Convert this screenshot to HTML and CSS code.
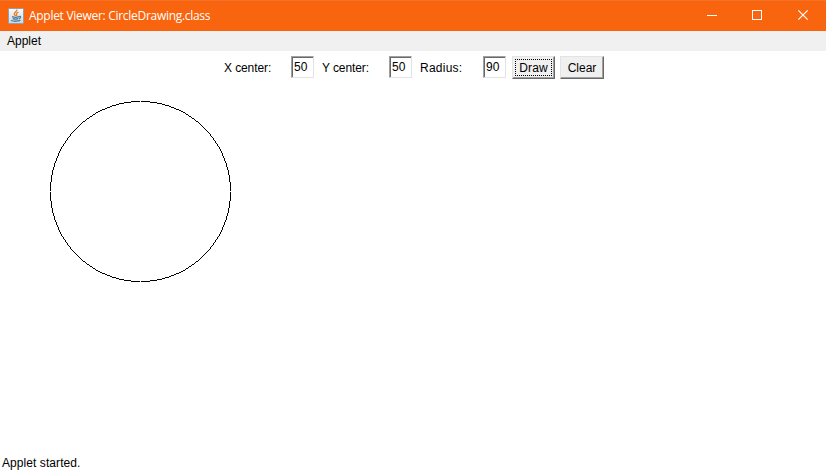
FILE: index.html
```
<!DOCTYPE html>
<html lang="en">
<head>
<meta charset="utf-8">
<title>Applet Viewer: CircleDrawing.class</title>
<link rel="stylesheet" href="styles.css">
</head>
<body>
<div class="window">
  <header class="titlebar">
    <svg class="logo" width="16" height="16" viewBox="0 0 16 16">
      <defs><linearGradient id="tile" x2="0" y2="1"><stop stop-color="#fafafa"/><stop offset="1" stop-color="#cfd6dd"/></linearGradient></defs>
      <rect x=".5" y=".5" width="15" height="15" rx="1" fill="url(#tile)" stroke="#8fa0ad"/>
      <path d="M8.8 1.5C9.5 3.5 6 4.4 6.3 6c.1.8.8 1.1 1.1 2M10.6 4C8.9 4.8 8 5.6 8.6 6.5c.4.6.1 1.1-.4 1.5" fill="none" stroke="#f07a22" stroke-width="1.3"/>
      <path d="M4 8.7c2 .7 5.300.7 7 0M4.700 10.600c1.800.6 4 .6 5.500 0M3 12.500c2.500 1 7.500 1 9.500-.2M11 8.600c2.200-.5 2.200 1.700-.2 2.300" fill="none" stroke="#487b9c" stroke-width="1.3"/>
    </svg>
    <span class="title">Applet Viewer: CircleDrawing.class</span>
    <div class="controls">
      <svg width="46" height="30" viewBox="0 0 46 30"><path d="M17 14.500h10" /></svg>
      <svg width="46" height="30" viewBox="0 0 46 30"><path d="M16.500 9.500h9v9h-9z"/></svg>
      <svg width="46" height="30" viewBox="0 0 46 30"><path class="cross" d="M16.300 9.300l9.400 9.400M25.700 9.300l-9.400 9.400"/></svg>
    </div>
  </header>
  <nav class="menubar"><span>Applet</span></nav>
  <main class="applet">
    <form class="toolbar">
      <label for="x">X center:</label><input id="x" value="50">
      <label for="y">Y center:</label><input id="y" value="50">
      <label for="r">Radius:</label><input id="r" value="90">
      <button type="button" class="draw"><span>Draw</span></button>
      <button type="button" class="clear"><span>Clear</span></button>
    </form>
    <canvas class="canvas" width="826" height="371"></canvas>
  </main>
  <footer class="status">Applet started.</footer>
</div>
<script src="circle.js"></script>
</body>
</html>
```
FILE: circle.js
```
// Plots a one-pixel circle by octants, leaving the four axis points open.
const ctx = document.querySelector('.canvas').getContext('2d');

function drawCircle(cx, cy, r) {
  for (let a = 1; a <= r * Math.SQRT1_2 + 0.5; a++) {
    const b = Math.round(Math.sqrt(r * r - a * a));
    for (const [dx, dy] of [[a, b], [b, a]]) {
      for (const sx of [-1, 1]) {
        for (const sy of [-1, 1]) ctx.fillRect(cx + sx * dx, cy + sy * dy, 1, 1);
      }
    }
  }
}

drawCircle(140, 111, 90);
```
FILE: styles.css
```
* { box-sizing: border-box; }
body {
  margin: 0;
  background: #fff;
  color: #000;
  font: 12px/14px "Liberation Sans", Arial, sans-serif;
}
.window { display: flex; flex-direction: column; width: 826px; height: 473px; overflow: hidden; }
.titlebar {
  display: flex;
  height: 31px;
  padding-left: 8px;
  align-items: center;
  background: #f9640e;
  border-top: 1px solid #f47228;
  color: #fff;
}
.logo { flex: none; }
.title { margin-left: 5px; font: 12px/16px "Open Sans", "Noto Sans", sans-serif; letter-spacing: -0.29px; white-space: nowrap; }
.controls { display: flex; margin-left: auto; margin-right: -2px; height: 30px; }
.controls path { fill: none; stroke: #fff; shape-rendering: crispEdges; }
.controls .cross { stroke-width: 1.2; shape-rendering: auto; }
.menubar { height: 20px; padding: 3px 7px; background: #f0f0f0; }
.applet { height: 403px; }
.toolbar { display: flex; height: 29px; padding: 5px 0 0 224px; align-items: flex-start; }
.toolbar label { width: 67px; padding-top: 5px; letter-spacing: -0.1px; white-space: nowrap; }
.toolbar label[for="r"] { width: 63px; letter-spacing: 0.25px; }
.toolbar input {
  width: 23px;
  height: 22px;
  margin: 0 8px 0 0;
  padding: 0 0 1px 1px;
  border: 1px solid;
  border-color: #a0a0a0 #e3e3e3 #e3e3e3 #a0a0a0;
  padding: 1px 1px 2px 2px;
  box-shadow: inset 1px 1px #696969;
  border-radius: 0;
  outline: 0;
  background: #fff;
  color: #000;
  font: inherit;
}
.toolbar #r { margin-right: 6px; }
.toolbar button {
  height: 23px;
  padding: 2px;
  border: 1px solid;
  border-color: #e3e3e3 #696969 #696969 #e3e3e3;
  box-shadow: inset -1px -1px #a0a0a0;
  border-radius: 0;
  background: #f0f0f0;
  color: #000;
  font: inherit;
}
.toolbar button span { display: block; height: 17px; line-height: 18px; text-align: center; }
.toolbar .draw { width: 43px; margin-right: 5px; }
.toolbar .draw span { border: 1px dotted #000; line-height: 16px; letter-spacing: 0.1px; }
.toolbar .clear { width: 44px; }
.canvas { display: block; }
.status { padding: 2px; letter-spacing: 0.07px; white-space: nowrap; }
```
